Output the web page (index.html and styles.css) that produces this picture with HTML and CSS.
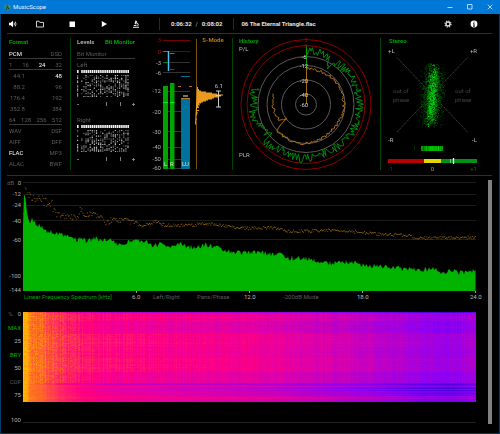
FILE: index.html
```html
<!DOCTYPE html>
<html lang="en">
<head>
<meta charset="utf-8">
<title>MusicScope</title>
<link rel="stylesheet" href="styles.css">
</head>
<body>
<div class="window">
  <header class="titlebar">
    <svg class="app-icon" viewBox="0 0 14 14" aria-hidden="true"><circle cx="7" cy="7" r="6.500" fill="#2b8c88"/><path d="M4 12 6.500 7.500 5 5.500 7 2.500 8.500 5 8 7.500 10.500 11" fill="none" stroke="#062f38" stroke-width="1.700"/><path d="M3.500 3.500 5 5M9 3.500l2 2.500" stroke="#9ad36f" stroke-width="1.200"/></svg>
    <h1 class="app-name">MusicScope</h1>
    <button class="caption" aria-label="Minimize"><svg viewBox="0 0 6 6"><path d="M.5 3.500h5"/></svg></button>
    <button class="caption" aria-label="Maximize"><svg viewBox="0 0 6 6"><path d="M.5.5h4.500v4.500H.5z"/></svg></button>
    <button class="caption" aria-label="Close"><svg viewBox="0 0 6 6"><path d="M.7.7l4.600 4.600M5.300.7.7 5.300"/></svg></button>
  </header>

  <nav class="toolbar">
    <button class="tool tool-first" aria-label="Volume"><svg viewBox="0 0 8 8"><path d="M0 2.800h1.700L4 .8v6.400L1.700 5.200H0z" fill="#fff"/><path d="M5 2.600q.9 1.400 0 2.800M6.200 1.600q1.700 2.400 0 4.800" fill="none" stroke="#fff" stroke-width=".8"/></svg></button>
    <button class="tool" aria-label="Open"><svg viewBox="0 0 8 8"><path d="M.5 7V1.200h2.600l.7 1.200h3.700V7z" fill="none" stroke="#e8e8e8" stroke-width=".9"/></svg></button>
    <button class="tool" aria-label="Stop"><svg viewBox="0 0 8 8"><path d="M1.500 1.500h5.500v5.500H1.500z" fill="#fff"/></svg></button>
    <button class="tool" aria-label="Play"><svg viewBox="0 0 8 8"><path d="M1.800 1 7 4 1.800 7z" fill="#fff"/></svg></button>
    <button class="tool" aria-label="Analyze"><svg viewBox="0 0 8 8"><path d="M3.200.4 5.200.9 4.300 4.600 2.600 4.100z" fill="#ddd"/><path d="M5 2.600q2 1.500.7 3.600M1 7.300h6M1.800 5.500h2.700" fill="none" stroke="#fff" stroke-width=".9"/></svg></button>
    <p class="time"><span>0:06:32</span><span class="slash">/</span><span>0:08:02</span></p>
    <p class="track">06 The Eternal Triangle.flac</p>
    <button class="tool tool-end" aria-label="Settings"><svg viewBox="0 0 8 8"><circle cx="4" cy="4" r="2.900" fill="none" stroke="#ddd" stroke-width="1.400" stroke-dasharray="1.300 .97"/><circle cx="4" cy="4" r="1.900" fill="none" stroke="#ddd" stroke-width="1.200"/></svg></button>
    <button class="tool tool-end" aria-label="Information"><svg viewBox="0 0 8 8"><circle cx="4" cy="4" r="3.400" fill="#fff"/><path d="M4 1.600v1.100M4 3.400v3M3.200 3.700H4M3.200 6.200h1.600" stroke="#000" stroke-width=".9"/></svg></button>
  </nav>

  <main>
    <section class="panels">
      <div class="panel format">
        <h2 class="heading green">Format</h2>
        <div class="row ruled"><span class="on">PCM</span><span>DSD</span></div>
        <div class="row ruled"><span>1</span><span>16</span><span class="on">24</span><span>32</span></div>
        <div class="row"><span class="rate">44.1</span><span class="on">48</span></div>
        <div class="row"><span class="rate">88.2</span><span>96</span></div>
        <div class="row"><span class="rate">176.4</span><span>192</span></div>
        <div class="row"><span class="rate">352.8</span><span>384</span></div>
        <div class="row ruled"><span>64</span><span>128</span><span>256</span><span>512</span></div>
        <div class="row"><span>WAV</span><span>DSF</span></div>
        <div class="row"><span>AIFF</span><span>DFF</span></div>
        <div class="row"><span class="on">FLAC</span><span>MP3</span></div>
        <div class="row"><span>ALAC</span><span>BWF</span></div>
      </div>

      <div class="panel levels">
        <div class="bits">
          <div class="heading tabs"><button class="tab">Levels</button><button class="tab green">Bit Monitor</button></div>
          <div class="row ruled"><span>Bit Monitor</span></div>
          <div class="row"><span>Left</span></div>
          <svg id="bits-left" class="drawing" viewBox="77 70 58 44"></svg>
          <div class="row"><span>Right</span></div>
          <svg id="bits-right" class="drawing" viewBox="77 70 58 44"></svg>
        </div>
        <svg class="drawing meters" viewBox="145 38 87 132">
          <path d="M163 62.500h27M163 72.500h27M163 91.500h27M163 111.500h27M163 131.500h27M163 147.500h27M163 159.500h27M163 168.500h27" stroke="#333"/>
          <path d="M163 40.500h27M163 51.500h27" stroke="#700"/>
          <g class="scale" text-anchor="end">
            <text class="red" x="161" y="42">3</text><text class="red" x="161" y="54">0</text>
            <text x="161" y="65">-3</text><text x="161" y="75">-6</text><text x="161" y="93">-12</text><text x="161" y="114">-20</text>
            <text x="161" y="134">-30</text><text x="161" y="149">-40</text><text x="161" y="161">-50</text><text x="161" y="170">-60</text>
          </g>
          <path d="M163 86h5v83h-5zM170 83h4.500v86H170z" fill="#00a400"/>
          <path d="M163 102.500h5M170 102.500h4.500" stroke="#00ee10"/>
          <path d="M163 51.500h5M170 53.500h4.500" stroke="#00b050"/><path d="M163 62.500h4M170 69.500h4.500" stroke="#007a00"/>
          <path d="M168.500 51v20" stroke="#4cc0e8" stroke-width="1.500"/>
          <path d="M181 99h9v70h-9z" fill="#00709c"/><path d="M181 98.500h9" stroke="#b77c2a"/>
          <path d="M181 76.500h9" stroke="#00709c"/><path d="M183 96h5" stroke="#777" stroke-width="2"/>
          <path d="M178 86.500h3M189 86.500h3" stroke="#b87012"/>
          <g class="inbar"><text x="164" y="166">L</text><text x="170" y="166">R</text><text x="182" y="166">LU</text></g>
          <path d="M196.500 39v130" stroke="#7b5210"/>
          <path d="M197 86v1h1v2h1v1.500h2v1h5v1h6v1h5v1h6v1h-2v1h-3v1h-4v1h-2v1h-4v1h-2v1h-3v1h-2v1h-2v1h1v1h-2v1h1v1.500h-2v2h2v1h-2v1.500h1v1h-1v2h-1v3h1v1h-1v5h-1z" fill="#e99a20"/>
          <path d="M218.500 91v16M216 91h5M216 95.500h5M216 107h5" stroke="#ccc"/>
          <text class="amber" x="213" y="42" text-anchor="middle">S-Mode</text>
          <text class="pale" x="219" y="88" text-anchor="middle">6.1</text>
        </svg>
      </div>

      <div class="panel">
        <svg class="drawing" viewBox="233 38 147 132">
          <g fill="none" stroke="#5a5a5a"><circle cx="306" cy="104.500" r="48"/><circle cx="306" cy="104.500" r="39"/><circle cx="306" cy="104.500" r="24.500"/><circle cx="306" cy="104.500" r="10.500"/></g>
          <g fill="none" stroke="#8c0000"><circle cx="306" cy="104.500" r="65"/><circle cx="306" cy="104.500" r="59"/></g>
          <path id="history-peak" fill="none" stroke="#00940e" stroke-width=".9"/>
          <path id="history-loud" fill="none" stroke="#c07c1c" stroke-width=".9"/>
          <path d="M306.500 46v24" stroke="#00a000"/><path d="M306.500 68v36" stroke="#a06a12"/>
          <g class="scale bright" text-anchor="middle">
            <text class="red" x="306" y="42">3</text><text class="red" x="306" y="48">0</text>
            <text x="304" y="59">-6</text><text x="304" y="68">-12</text><text x="304" y="83">-20</text><text x="304" y="97">-40</text><text x="304" y="107">-60</text>
          </g>
          <text class="green title" x="239" y="43">History</text>
          <text class="pale" x="239" y="51">P/L</text><text class="pale" x="239" y="157">PLR</text>
        </svg>
      </div>

      <div class="panel panel-last">
        <svg class="drawing" viewBox="381 38 118 132">
          <path d="M397 57.500 467.500 132M467.500 57.500 397 132" stroke="#404040" stroke-dasharray="1.500 .7"/>
          <g id="stereo-cloud"></g>
          <g id="stereo-strip"></g>
          <path d="M388 159h36v4h-36z" fill="#b80000"/><path d="M424 159h17v4h-17z" fill="#e0d800"/><path d="M441 159h36v4h-36z" fill="#009414"/>
          <path d="M453.500 158v6" stroke="#fff" stroke-width="1.300"/><path d="M450.500 159v4" stroke="#6fc878"/>
          <text class="green title" x="389" y="43">Stereo</text>
          <g class="pale"><text x="388" y="53">+L</text><text x="477" y="53" text-anchor="end">+R</text><text x="388" y="142">-R</text><text x="477" y="142" text-anchor="end">-L</text></g>
          <g class="faint"><text x="393" y="93">out of</text><text x="393" y="102">phase</text><text x="455" y="93">out of</text><text x="455" y="102">phase</text></g>
          <text class="red" x="388" y="171">-1</text><text class="yellow" x="432.500" y="171" text-anchor="middle">0</text><text class="darkgreen" x="477" y="171" text-anchor="end">+1</text>
        </svg>
      </div>
    </section>

    <div class="analysis">
      <div class="charts">
        <svg class="drawing" viewBox="1 178 482 114">
          <path d="M23 182.500h453M23 194.500h453M23 205.500h453M23 220.500h453M23 239.500h453" stroke="#1d1d1d"/>
          <g id="spectrum-max"></g>
          <path id="spectrum-now" fill="#00b400"/>
          <path d="M136.500 291v2M249.500 291v2M362.500 291v2M475.500 291v2" stroke="#999"/>
          <g class="scale" text-anchor="end">
            <text x="21" y="185">0</text><text x="21" y="196">-12</text><text x="21" y="207">-24</text><text x="21" y="223">-40</text><text x="21" y="242">-60</text><text x="21" y="278">-100</text><text x="21" y="292">-144</text>
          </g>
          <text class="dim" x="7" y="185">dB</text>
        </svg>
        <div class="legend">
          <button class="green">Linear Frequency Spectrum [kHz]</button><span class="tick">6.0</span>
          <button>Left/Right</button><button>Pans/Phase</button><span class="tick">12.0</span>
          <button>-200dB Mode</button><span class="tick">18.0</span><span class="tick">24.0</span>
        </div>
        <div class="spectrogram">
          <div class="history-scale">
            <div><span class="unit">%</span>0</div><button class="green">MAX</button><div>25</div><button class="green">BRY</button><div>50</div><button class="off">COF</button><div>75</div>
          </div>
          <canvas id="heat" width="453" height="90"></canvas>
          <div class="end-label">100</div><div class="end-line"></div>
        </div>
      </div>
      <div class="scrollbar"></div>
    </div>
  </main>
</div>
<script src="charts.js"></script>
</body>
</html>
```
FILE: styles.css
```css
* { box-sizing: border-box; margin: 0; padding: 0; }
body {
  background: #000;
  color: #5c5c5c;
  font: 6px/8px Roboto, "Liberation Sans", sans-serif;
}
button { background: none; border: 0; color: inherit; font: inherit; cursor: pointer; }
svg { display: block; }

.window { min-height: 100vh; border: 1px solid #003d6b; border-top: 0; background: #000; }

.titlebar { display: flex; align-items: center; height: 14px; margin: 0 -1px; padding-left: 4px; background: #0078d7; color: #e4f2ff; }
.app-icon { width: 7px; height: 7px; margin-right: 2px; }
.app-name { flex: 1; font-size: 6px; font-weight: 400; }
.caption { width: 20px; height: 14px; display: grid; place-items: center; }
.caption svg { width: 6px; height: 6px; fill: none; stroke: #d9ecff; stroke-width: 0.8; }

.toolbar { display: flex; align-items: center; height: 19px; padding-right: 12px; color: #e4e4e4; font-weight: 700; }
.tool { width: 32px; height: 16px; display: grid; place-items: center; }
.tool svg { width: 8px; height: 8px; }
.tool-first { width: 23px; }
.tool-end { width: 26px; }
.time { display: flex; gap: 4px; margin-left: 7px; padding: 2px 11px; border: solid #004600; border-width: 0 1px; }
.slash { color: #888; }
.track { flex: 1; padding-left: 7px; }

.panels { display: grid; grid-template-columns: 70fr 162fr 148fr 118fr; margin-top: 1px; padding: 4px 0 5px; position: relative; }
.panels::before, .panels::after { content: ""; position: absolute; left: 6px; right: 7px; height: 1px; background: #005000; }
.panels::before { top: -1px; }
.panels::after { bottom: -1px; }
.panel { min-width: 0; border-right: 1px solid #004200; }
.panel-last { border-right: 0; }
.drawing { width: 100%; height: auto; overflow: visible; }

.heading { height: 7px; margin-bottom: 3px; font-size: 6px; font-weight: 700; line-height: 7px; }
.title { font-weight: 700; }
.green { color: #00a000; fill: #00a000; }
.row { display: flex; justify-content: space-between; height: 11px; line-height: 11px; }
.ruled { border-bottom: 1px solid #3a3a3a; }
.on { color: #fff; }
.rate { width: 16px; text-align: right; }
.format { padding: 0 8px; }

.levels { display: grid; grid-template-columns: 74fr 87fr; }
.bits { padding: 0 10px 0 6px; min-width: 0; }
.tabs { display: flex; justify-content: space-between; color: #aaa; }
.tabs .green { color: #00a000; }

text { font-size: 6px; }
.scale { fill: #b0b0b0; }
.bright { fill: #d0d0d0; }
.pale { fill: #bbb; }
.faint { fill: #444; }
.dim { fill: #5c5c5c; }
.red { fill: #b00000; }
.yellow { fill: #b0a800; }
.amber { fill: #b07814; font-weight: 700; }
.darkgreen { fill: #007c00; }
.inbar { fill: #c8f0c8; }

.analysis { display: grid; grid-template-columns: minmax(0, 1fr) 4px; gap: 5px; margin-top: 1px; padding: 2px 7px 4px 0; }
.scrollbar { margin-top: 2px; background: #808080; }
.legend { display: grid; grid-template-columns: 108fr 21fr 44fr 47fr 39fr 74fr 113fr 13fr; margin-left: 23px; white-space: nowrap; }
.legend > * { min-width: 0; text-align: left; }
.legend .tick { color: #bbb; padding-top: 1px; }

.spectrogram { display: grid; grid-template-columns: 20px minmax(0, 1fr); column-gap: 2px; padding: 11px 7px 0 0; }
.spectrogram canvas { width: 100%; height: auto; display: block; }
.history-scale { display: flex; flex-direction: column; justify-content: space-between; margin: -2px 0 3px; color: #b0b0b0; text-align: right; }
.history-scale > * { text-align: right; line-height: 8px; }
.history-scale .green { color: #00b400; }
.history-scale .off, .unit { color: #5c5c5c; }
.unit { margin-right: 5px; }
.end-label { margin-top: 14px; color: #b0b0b0; text-align: right; line-height: 8px; }
.end-line { margin-top: 20px; height: 1px; background: #222; }
```
FILE: charts.js
```js
// Small seeded generator so that the drawings are the same on each load.
let seed = 4711;
function rnd() {
  seed = (seed * 1664525 + 1013904223) % 4294967296;
  return seed / 4294967296;
}
const NS = "http://www.w3.org/2000/svg";
const byId = (id) => document.getElementById(id);

function add(parent, name, attrs) {
  const node = document.createElementNS(NS, name);
  for (const key in attrs) node.setAttribute(key, attrs[key]);
  parent.appendChild(node);
  return node;
}

// Linear interpolation in a list of [x, value] pairs.
function curve(points, x) {
  for (let i = 1; i < points.length; i++) {
    if (x <= points[i][0]) {
      const [x0, y0] = points[i - 1];
      const [x1, y1] = points[i];
      return y0 + ((y1 - y0) * (x - x0)) / (x1 - x0);
    }
  }
  return points[points.length - 1][1];
}

// Bit monitors
for (const id of ["bits-left", "bits-right"]) {
  const svg = byId(id);
  const tone = { bright: "", mid: "" };
  let head = "";
  for (let c = 0; c < 25; c++) {
    if (c === 1) continue;
    const x = 77 + c * 2.1;
    head += `M${x} 70h1.600v3h-1.600z`;
    for (let r = 0; r < 16; r++) {
      const density = c === 0 ? 0.7 : c < 4 ? 0.25 : 0.58;
      if (rnd() < density) {
        tone[rnd() < 0.5 ? "bright" : "mid"] += `M${x} ${75 + r * 1.4}h1.200v1.100h-1.200z`;
      }
    }
  }
  add(svg, "path", { d: head, fill: "#f0f0f0" });
  add(svg, "path", { d: tone.bright, fill: "#bdbdbd" });
  add(svg, "path", { d: tone.mid, fill: "#666" });
  add(svg, "path", { d: "M77 104.500h2M106.500 102v4M120.500 102v4M132 104.500h3M133.500 103v3", stroke: "#999", "stroke-width": 0.8 });
}

// History traces, clockwise from the top
function polar(points, jitter, step) {
  let d = "";
  for (let a = 0; a <= 289; a += step) {
    const r = curve(points, a) + (rnd() - 0.5) * jitter;
    const t = (a * Math.PI) / 180;
    d += (d ? "L" : "M") + (306 + r * Math.sin(t)).toFixed(1) + " " + (104.5 - r * Math.cos(t)).toFixed(1);
  }
  return d;
}
byId("history-peak").setAttribute("d", polar(
  [[0, 54], [15, 53], [28, 50], [31, 41], [34, 51], [60, 53], [90, 54], [125, 54], [150, 52], [185, 54], [205, 52], [229, 54], [231, 42], [234, 50], [260, 53], [289, 53]], 9, 1.3));
byId("history-loud").setAttribute("d", polar(
  [[0, 36], [20, 36], [45, 37], [90, 38], [140, 36], [180, 39], [229, 39], [234, 25], [239, 31], [270, 33], [289, 34]], 2.8, 2));

// Stereo field
const cloud = ["", "", ""];
for (let i = 0; i < 2100; i++) {
  const y = 62 + rnd() * 66;
  const edge = Math.abs(y - 95) / 33;
  if (rnd() < edge * edge * edge) continue;
  const spread = (rnd() + rnd() + rnd() - 1.5) * 10;
  const x = 432 + spread + (95 - y) * 0.06;
  const level = Math.abs(spread) < 3 ? 2 : Math.abs(spread) < 5 ? 1 : 0;
  const tone = rnd() < edge * 0.6 ? 0 : level;
  cloud[tone] += `M${x.toFixed(1)} ${y.toFixed(1)}h.8v.8h-.8z`;
}
["#005400", "#008e00", "#00cc10"].forEach((fill, i) => add(byId("stereo-cloud"), "path", { d: cloud[i], fill }));
for (let x = 421; x < 443; x++) {
  const gap = x === 423 || x === 427 || x === 439;
  add(byId("stereo-strip"), "rect", { x, y: 146, width: 1, height: 5, fill: `rgb(0,${Math.round((gap ? 50 : 90) + Math.min(1, (x - 420) / 8) * 60 + rnd() * 60)},0)` });
}
add(byId("stereo-strip"), "rect", { x: 414, y: 146, width: 1, height: 5, fill: "#002c00" });

// Frequency spectrum
const now = [[23, 226], [24, 195], [25, 196], [27, 212], [29, 221], [33, 219], [36, 225], [43, 227], [46, 231], [60, 235], [70, 235], [77, 240], [82, 237], [87, 242], [97, 237], [101, 242], [110, 239], [116, 244], [125, 243], [136, 240], [145, 241], [155, 246], [163, 243], [169, 247], [178, 244], [190, 247], [206, 245], [220, 248], [232, 252], [250, 253], [258, 252], [270, 254], [280, 254], [290, 258], [305, 258], [320, 262], [335, 263], [355, 262], [367, 267], [378, 265], [390, 268], [420, 270], [435, 269], [442, 273], [450, 270], [460, 273], [470, 271], [475.5, 270]];
let outline = "M23 291";
for (let x = 23; x <= 475.5; x += 1) {
  const y = curve(now, x) + (x < 26 ? 0 : (rnd() - 0.5) * 5);
  outline += `L${x} ${y.toFixed(1)}`;
}
byId("spectrum-now").setAttribute("d", outline + "L475.500 270V291z");

const peak = [[23, 210], [25, 190], [28, 197], [40, 199], [52, 203], [54, 213], [60, 215], [78, 217], [80, 208], [84, 214], [100, 215], [105, 222], [114, 219], [135, 222], [142, 226], [155, 221], [165, 225], [190, 225], [205, 223], [220, 225], [245, 228], [270, 227], [290, 231], [330, 230], [350, 231], [380, 234], [410, 235], [412, 238], [475, 237]];
let dots = "";
for (let x = 23; x < 475; x += 0.9) {
  const jitter = x < 55 ? 10 : x < 135 ? 6 : 3;
  dots += `M${x.toFixed(1)} ${(curve(peak, x) + (rnd() - 0.5) * jitter).toFixed(1)}h1v.9h-1z`;
}
add(byId("spectrum-max"), "path", { d: dots, fill: "#8a5e12" });

// Spectrogram
const stops = [[0, 40, 0, 170], [0.15, 90, 0, 230], [0.3, 140, 0, 245], [0.45, 182, 0, 205], [0.6, 228, 0, 165], [0.7, 255, 0, 130], [0.8, 255, 45, 95], [0.9, 255, 110, 35], [1, 255, 190, 0]];
const channel = (v, i) => curve(stops.map((s) => [s[0], s[i]]), v);
const base = [[0, 0.99], [4, 0.97], [6, 0.92], [20, 0.89], [40, 0.8], [60, 0.74], [100, 0.69], [200, 0.64], [250, 0.61], [300, 0.54], [350, 0.47], [400, 0.36], [430, 0.34], [453, 0.4]];
const canvas = byId("heat");
const ctx = canvas.getContext("2d");
const columns = Array.from({ length: 453 }, () => (rnd() - 0.5) * 0.06);
for (let y = 0; y < 90; y++) {
  const quiet = y >= 72;
  let shift = y < 1 ? -0.2 : y < 9 ? 0.01 : y < 22 ? -0.05 : y < 35 ? 0.035 : y < 46 ? 0.01 : y < 60 ? 0.035 : y < 71 ? -0.02 : y < 73 ? -0.15 : -0.04;
  shift += (rnd() - 0.5) * 0.04;
  const stripe = quiet ? (y < 84 ? -0.11 : -0.02) + (rnd() - 0.5) * 0.18 : 0;
  let run = 0;
  for (let x = 0; x < 453; x++) {
    if (x % 4 === 0) run = (rnd() - 0.5) * (quiet ? 0.02 : 0.035);
    const warm = x > 6 && x < 60 && !quiet ? (rnd() - 0.5) * 0.06 : 0;
    const edge = Math.min(1, x / 90);
    const v = curve(base, x) + shift * edge + run + warm + columns[x] * (quiet ? 0.3 : 1) + stripe * Math.min(1, x / 400);
    const k = Math.max(0, Math.min(1, v));
    ctx.fillStyle = `rgb(${channel(k, 1) | 0},${channel(k, 2) | 0},${channel(k, 3) | 0})`;
    ctx.fillRect(x, y, 1, 1);
  }
}
```
